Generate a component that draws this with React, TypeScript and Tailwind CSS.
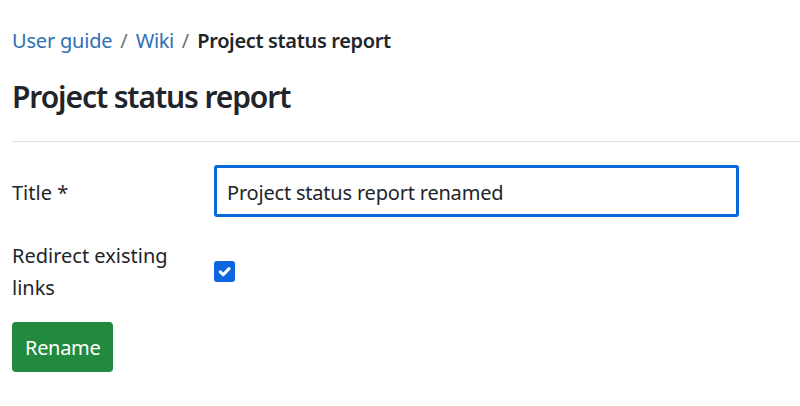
import React from "react";

export default function App() {
  return (
    <div className="min-h-[406px] bg-white overflow-hidden" style={{ fontFamily: '"Noto Sans", "Open Sans", sans-serif' }}>
      <div className="pl-3 pt-[26px]">
        <nav className="flex items-center text-[20px] leading-[30px] text-[#212529]">
          <a className="text-[#2f6fb3] tracking-[-0.2px]">User guide</a>
          <span className="px-2 text-[#6c757d]">/</span>
          <a className="text-[#2f6fb3] tracking-[-0.4px]">Wiki</a>
          <span className="px-2 text-[#6c757d]">/</span>
          <span className="font-semibold tracking-[-0.35px]">Project status report</span>
        </nav>
        <h1 className="mt-[22px] text-[30px] leading-[38px] font-semibold text-[#212529] tracking-[-1.1px]">Project status report</h1>
        <div className="mt-[25px] h-px bg-[#dee2e6] w-[900px]" />
        <form className="mt-[23px] text-[20px] text-[#212529]">
          <div className="flex items-center">
            <label className="w-[202px] shrink-0 leading-[30px] pt-[4px]">Title *</label>
            <div className="w-[525px] h-[52px] border-[3px] border-[#0a69da] rounded-[3px] flex items-center px-[10px] pt-[4px] leading-[30px] tracking-[-0.2px]">
              Project status report renamed
            </div>
          </div>
          <div className="flex items-center mt-[21px]">
            <label className="w-[202px] shrink-0 leading-[32px] pr-4 pt-[2px]">Redirect existing links</label>
            <div className="w-[21px] h-[21px] rounded-[3px] bg-[#0d66e0] flex items-center justify-center">
              <svg width="21" height="21" viewBox="0 0 20 20" fill="none">
                <path d="M6 10.3l2.8 2.8L14.3 7.3" stroke="white" strokeWidth="3" strokeLinecap="round" strokeLinejoin="round" />
              </svg>
            </div>
          </div>
          <button type="button" className="mt-[18px] h-[50px] px-[13px] pt-[2px] rounded-[4px] bg-[#218a3f] text-white text-[20px] leading-[30px] tracking-[-0.3px]">
            Rename
          </button>
        </form>
      </div>
    </div>
  );
}
